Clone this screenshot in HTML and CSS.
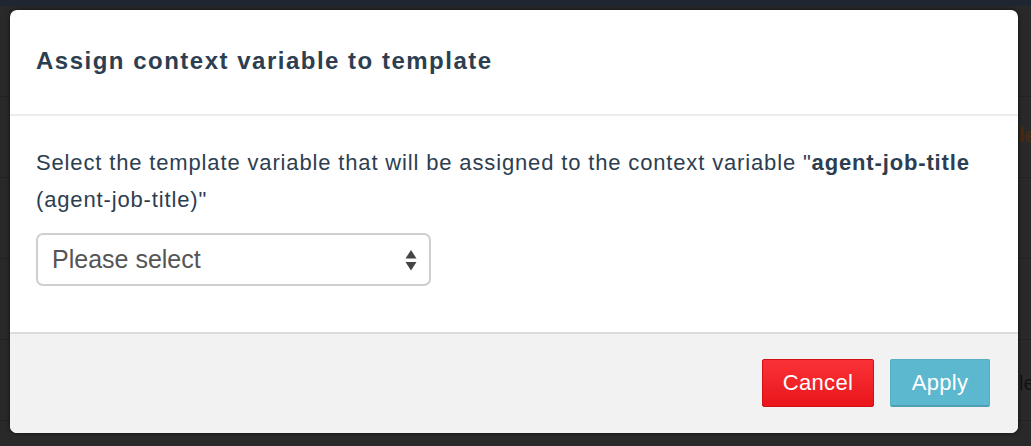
FILE: index.html
```html
<!DOCTYPE html>
<html>
<head>
<meta charset="utf-8">
<link rel="stylesheet" href="styles.css">
</head>
<body>
<div class="backdrop">
  <div class="topbar"></div>
  <div class="rows">
    <div class="row r1"></div>
    <div class="row r2"></div>
    <div class="row r3"></div>
    <div class="row r4"></div>
    <div class="row r5"></div>
  </div>
  <span class="bg-text bg-orange">le</span>
  <span class="bg-text bg-dark">le</span>
</div>
<div class="modal">
  <div class="modal-header">
    <h4 class="modal-title">Assign context variable to template</h4>
  </div>
  <div class="modal-body">
    <p class="desc">Select the template variable that will be assigned to the context variable "<b>agent-job-title</b> (agent-job-title)"</p>
    <div class="select">
      <span class="select-text">Please select</span>
      <svg class="arrows" width="12" height="24" viewBox="0 0 12 24">
        <path d="M6 2 L11.5 10.5 L0.5 10.5 Z" fill="#444"/>
        <path d="M0.5 14 L11.5 14 L6 22.5 Z" fill="#444"/>
      </svg>
    </div>
  </div>
  <div class="modal-footer">
    <button class="btn btn-cancel">Cancel</button>
    <button class="btn btn-apply">Apply</button>
  </div>
</div>
</body>
</html>
```
FILE: styles.css
```css
html, body {
  margin: 0;
  padding: 0;
  width: 1031px;
  height: 446px;
  overflow: hidden;
  background: #2a2a2a;
  font-family: "Liberation Sans", Arial, sans-serif;
}
body {
  position: relative;
}
.backdrop {
  position: absolute;
  inset: 0;
  background: #292929;
}
.topbar {
  height: 6px;
  background: #1f2631;
}
.rows {
  display: flex;
  flex-direction: column;
}
.row {
  border-bottom: 1px solid #222;
  height: 80px;
}
.r1 { height: 90px; }
.bg-text {
  position: absolute;
  left: 1019px;
  font-size: 20px;
  font-weight: bold;
}
.bg-orange { top: 124px; color: #4a2a10; }
.bg-dark { top: 372px; color: #111; font-weight: normal; }
.modal {
  position: absolute;
  left: 10px;
  top: 10px;
  width: 1008px;
  height: 423px;
  background: #fff;
  border-radius: 7px;
  overflow: hidden;
  display: flex;
  flex-direction: column;
  box-shadow: 0 0 4px rgba(0,0,0,0.6);
}
.modal-header {
  height: 106px;
  border-bottom: 2px solid #ececec;
  padding: 0 26px 2px;
  display: flex;
  align-items: center;
  box-sizing: border-box;
}
.modal-title {
  margin: 0;
  font-size: 24px;
  font-weight: bold;
  color: #2c3e50;
  letter-spacing: 1.5px;
}
.modal-body {
  flex: 1;
  padding: 28px 26px 0;
}
.desc {
  margin: 0;
  font-size: 22px;
  line-height: 37px;
  color: #2c3e50;
  letter-spacing: 0.85px;
}
.select {
  margin-top: 15px;
  width: 395px;
  height: 53px;
  box-sizing: border-box;
  border: 2px solid #cfcfcf;
  border-radius: 7px;
  display: flex;
  align-items: center;
  justify-content: space-between;
  padding: 0 12px 0 14px;
}
.select-text {
  font-size: 25px;
  color: #555;
}
.modal-footer {
  height: 101px;
  background: #f2f2f2;
  border-top: 2px solid #dcdcdc;
  display: flex;
  justify-content: flex-end;
  align-items: flex-start;
  gap: 16px;
  padding: 25px 28px 0 0;
  box-sizing: border-box;
}
.btn {
  height: 48px;
  border-radius: 2px;
  color: #fff;
  font-family: "Liberation Sans", Arial, sans-serif;
  font-size: 22px;
  letter-spacing: 0.3px;
  padding: 0;
  cursor: pointer;
}
.btn-cancel {
  width: 112px;
  background: linear-gradient(#f93237, #e9161b);
  border: 1px solid #cf1015;
}
.btn-apply {
  width: 100px;
  background: #5cb8cf;
  border: 1px solid #55aec4;
  border-bottom: 2px solid #4e9fb3;
}
```
